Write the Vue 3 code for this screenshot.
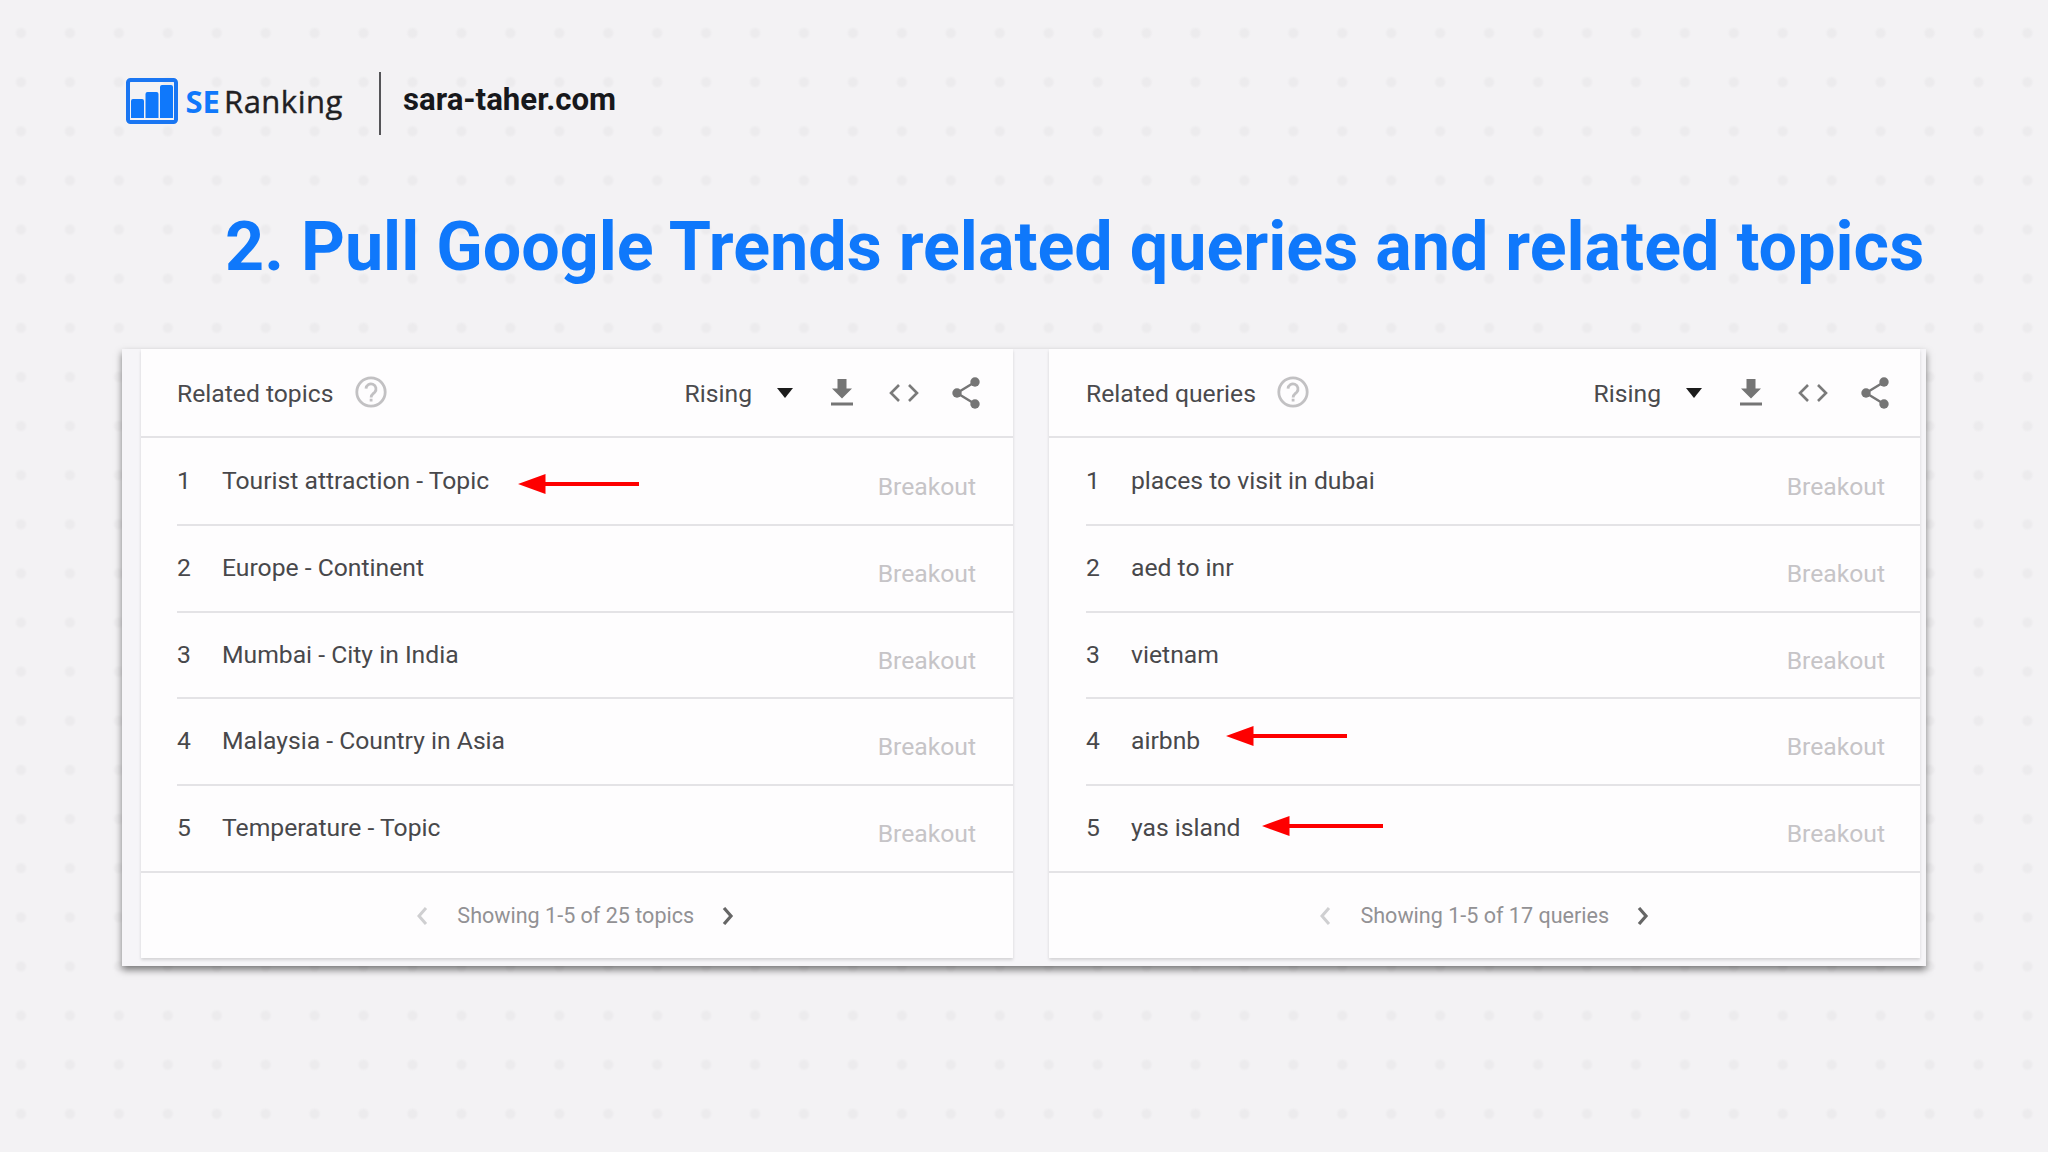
<script setup>
const panels = [
  {
    title: "Related topics",
    footer: "Showing 1-5 of 25 topics",
    rows: [
      { name: "Tourist attraction - Topic", arrow: { left: 29, top: 7 } },
      { name: "Europe - Continent" },
      { name: "Mumbai - City in India" },
      { name: "Malaysia - Country in Asia" },
      { name: "Temperature - Topic" }
    ]
  },
  {
    title: "Related queries",
    footer: "Showing 1-5 of 17 queries",
    rows: [
      { name: "places to visit in dubai" },
      { name: "aed to inr" },
      { name: "vietnam" },
      { name: "airbnb", arrow: { left: 26, top: -1 } },
      { name: "yas island", arrow: { left: 21.5, top: 2 } }
    ]
  }
]

function arrowStyle(arrow) {
  return { marginLeft: arrow.left + "px", marginTop: arrow.top + "px" }
}
</script>

<template>
  <div class="slide">
    <header class="brandBar">
      <svg class="logo" viewBox="0 0 52 46">
        <rect x="2" y="2" width="48" height="42" rx="2.5" fill="none" stroke="#1a76f2" stroke-width="4" />
        <path d="M5 40V23q0-2 2-2h9q2 0 2 2v17zM19.5 40V16q0-2 2-2h9q2 0 2 2v24zM34 40V9q0-2 2-2h9q2 0 2 2v31z" fill="#0f78fb" />
      </svg>
      <span class="brandSe">SE</span>
      <span class="brandName">Ranking</span>
      <div class="brandDivider"></div>
      <span class="site">sara-taher.com</span>
    </header>

    <h1>2. Pull Google Trends related queries and related topics</h1>

    <div class="shot">
      <section v-for="panel in panels" :key="panel.title" class="card">
        <div class="cardHead">
          <span class="cardTitle">{{ panel.title }}</span>
          <svg class="help" viewBox="0 0 32 32" fill="none" stroke="#c2c1c3" stroke-width="2.8">
            <circle cx="16" cy="16" r="14.2" />
            <path d="M11 12.600a5 5 0 1 1 8.700 3.600c-1.800 1.800-3.600 2.500-3.600 5.200M16.100 22.800v2.800" />
          </svg>
          <span class="rising">Rising</span>
          <svg class="caret" viewBox="0 0 16 10"><path d="M0 0h16L8 10z" fill="#1c1c1c" /></svg>
          <svg class="download" viewBox="0 0 22 27" fill="#757575">
            <path d="M6.5 0h9v9.500H21L11 19.500 1 9.500h5.500zM0 23.500h22v3H0z" />
          </svg>
          <svg class="embed" viewBox="0 0 30 18" fill="none" stroke="#7a7a7a" stroke-width="2.600">
            <path d="M10 1L2 9l8 8M20 1l8 8-8 8" />
          </svg>
          <svg class="share" viewBox="0 0 28 32" fill="#757575">
            <path d="M23 5L5 16l18 11" fill="none" stroke="#757575" stroke-width="2.400" />
            <circle cx="23" cy="5" r="4.700" /><circle cx="5" cy="16" r="4.700" /><circle cx="23" cy="27" r="4.700" />
          </svg>
        </div>
        <ol class="rows">
          <li v-for="(row, index) in panel.rows" :key="row.name" class="row">
            <span class="rowIndex">{{ index + 1 }}</span>
            <span class="rowName">{{ row.name }}</span>
            <svg v-if="row.arrow" class="arrow" :style="arrowStyle(row.arrow)" viewBox="0 0 121 20" fill="#fe0000">
              <path d="M0 10L27.500 0v8H121v4H27.500v8z" />
            </svg>
            <span class="rowValue">Breakout</span>
          </li>
        </ol>
        <div class="cardFoot">
          <svg class="chevron" viewBox="0 0 12 18" fill="none" stroke="#cfcfd1" stroke-width="3"><path d="M10 1L3 9l7 8" /></svg>
          <span class="footerText">{{ panel.footer }}</span>
          <svg class="chevron" viewBox="0 0 12 18" fill="none" stroke="#666" stroke-width="3.200"><path d="M2 1l7 8-7 8" /></svg>
        </div>
      </section>
    </div>
  </div>
</template>

<style>
body {
  margin: 0;
}
</style>

<style scoped>
.slide {
  box-sizing: border-box;
  width: 2048px;
  height: 1152px;
  padding: 72px 122px 0 122px;
  overflow: hidden;
  font-family: Roboto, sans-serif;
  background-color: #f3f2f4;
  background-image: radial-gradient(circle, #ecebed 0, #ecebed 3.5px, transparent 6.5px);
  background-size: 48.95px 49.13px;
  background-position: -3.5px 8.5px;
}
.brandBar {
  display: flex;
  height: 63px;
  padding-left: 4px;
}
.logo {
  width: 52px;
  height: 46px;
  margin-top: 6px;
}
.brandSe,
.brandName {
  font-family: "Open Sans", sans-serif;
  font-size: 31px;
  line-height: 42px;
  margin-top: 8px;
}
.brandSe {
  width: 34px;
  margin-left: 7.5px;
  font-weight: 700;
  color: #0f78fb;
}
.brandName {
  width: 119px;
  margin-left: 4.5px;
  font-weight: 500;
  letter-spacing: 0.5px;
  color: #1f2023;
  -webkit-text-stroke: 0.4px #1f2023;
}
.brandDivider {
  width: 2px;
  height: 63px;
  margin-left: 36px;
  background: #555558;
}
.site {
  margin-left: 22px;
  margin-top: 8px;
  font-size: 31.2px;
  font-weight: 700;
  line-height: 40px;
  color: #17181b;
}
h1 {
  margin: 72px 0 0 103px;
  height: 142px;
  font-size: 68.24px;
  line-height: 80px;
  font-weight: 700;
  white-space: nowrap;
  color: #0f78fb;
}
.shot {
  display: flex;
  gap: 36px;
  height: 617px;
  box-sizing: border-box;
  padding: 0 6px 8px 19px;
  background: #f6f5f8;
  box-shadow: 0 4px 7px rgba(0, 0, 0, 0.5);
}
.card {
  flex: 1;
  background: #fefdfe;
  box-shadow: 0 2px 3px rgba(0, 0, 0, 0.14);
}
.cardHead {
  display: flex;
  align-items: center;
  box-sizing: border-box;
  height: 89px;
  padding: 0 32.5px 0 36px;
  border-bottom: 2px solid #e4e3e6;
}
.card:last-child .cardHead {
  padding: 0 31px 0 37.5px;
}
.cardTitle,
.rising {
  padding-top: 2px;
  font-size: 24.7px;
  line-height: 28px;
  color: #4a4a4d;
}
.help {
  width: 32px;
  height: 32px;
  margin: 0 auto 2px 21.5px;
}
.caret {
  width: 16px;
  height: 10px;
  margin-left: 25px;
}
.download {
  width: 22px;
  height: 27px;
  margin-left: 38px;
}
.embed {
  width: 30px;
  height: 18px;
  margin-left: 36px;
}
.share {
  width: 28px;
  height: 32px;
  margin-left: 33px;
}
.rows {
  margin: 0;
  padding: 0 0 0 36px;
  list-style: none;
  height: 433px;
  border-bottom: 2px solid #e4e3e6;
}
.card:last-child .rows {
  padding-left: 37.5px;
}
.row {
  display: flex;
  align-items: flex-start;
  box-sizing: border-box;
  height: 87px;
  padding: 28px 36.5px 0 0;
  border-bottom: 2px solid #e4e3e6;
  font-size: 24.7px;
  line-height: 28px;
  color: #48484b;
}
.card:last-child .row {
  padding-right: 35px;
}
.row:first-child {
  height: 88px;
  padding-top: 29px;
}
.row:nth-child(3) {
  height: 86px;
}
.row:last-child {
  height: 85px;
  border-bottom: none;
}
.rowIndex {
  width: 45px;
}
.arrow {
  width: 121px;
  height: 20px;
}
.rowValue {
  margin: 6px 0 0 auto;
  color: #c6c4c7;
}
.cardFoot {
  display: flex;
  align-items: center;
  justify-content: center;
  height: 85px;
  padding-right: 3px;
}
.card:last-child .cardFoot {
  padding-right: 0;
}
.footerText {
  margin: 0 28px 0 29px;
  font-size: 21.55px;
  line-height: 26px;
  color: #929194;
}
.chevron {
  width: 12px;
  height: 18px;
}
</style>
